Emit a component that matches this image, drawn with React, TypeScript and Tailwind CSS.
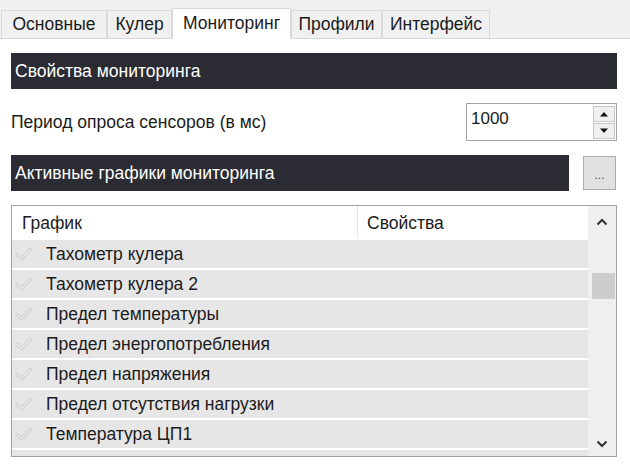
// Настройки — вкладка «Мониторинг»
import React from "react"

const tabs = [
  { label: "Основные", w: "w-[106px]" },
  { label: "Кулер", w: "w-[65px]" },
  { label: "Мониторинг", w: "w-[119px]", active: true },
  { label: "Профили", w: "w-[91px]" },
  { label: "Интерфейс", w: "w-[108px]" },
]

const rows = [
  "Тахометр кулера",
  "Тахометр кулера 2",
  "Предел температуры",
  "Предел энергопотребления",
  "Предел напряжения",
  "Предел отсутствия нагрузки",
  "Температура ЦП1",
  "",
]

function Check() {
  return (
    <svg width="18" height="14" viewBox="0 0 18 14" className="shrink-0">
      <path d="M2 7.5 L6.5 11.5 L15.5 2.5" fill="none" stroke="#cfcfcf" strokeWidth="3.2" strokeLinejoin="round" strokeLinecap="round" />
      <path d="M2 7.5 L6.5 11.5 L15.5 2.5" fill="none" stroke="#ececec" strokeWidth="1.2" strokeLinejoin="round" strokeLinecap="round" />
    </svg>
  )
}

function Chevron({ down }: { down?: boolean }) {
  return (
    <svg width="12" height="8" viewBox="0 0 12 8">
      <path d={down ? "M1.5 1.5 L6 6 L10.5 1.5" : "M1.5 6.5 L6 2 L10.5 6.5"} fill="none" stroke="#333" strokeWidth="2" />
    </svg>
  )
}

export default function App() {
  return (
    <div className="w-[630px] h-[472px] bg-white overflow-hidden text-[#1b1b1b] font-['Liberation_Sans',Arial,sans-serif]">
      {/* вкладки */}
      <div className="h-[39px] bg-[#f0f0f0] border-b border-[#d9d9d9] flex items-end pl-[1px]">
        {tabs.map(t =>
          t.active ? (
            <div key={t.label} className={`${t.w} h-[31px] -mb-px bg-white border border-b-0 border-[#d9d9d9] flex items-center justify-center text-[17.5px] pb-[2px]`}>
              {t.label}
            </div>
          ) : (
            <div key={t.label} className={`${t.w} h-[28px] bg-[#f0f0f0] border border-b-0 border-[#dadada] flex items-center justify-center text-[17.5px]`}>
              {t.label}
            </div>
          )
        )}
      </div>

      <div className="pl-[11px] pr-[13px]">
        <div className="mt-[14px] h-[36px] bg-[#2b2b33] text-white text-[17.5px] flex items-center pl-[4px]">
          Свойства мониторинга
        </div>

        <div className="mt-[14px] flex items-center justify-between">
          <span className="text-[17.5px]">Период опроса сенсоров (в мс)</span>
          <div className="w-[151px] h-[38px] border border-[#a5a5a5] flex">
            <div className="flex-1 pl-[4px] pt-[4px] text-[17px] leading-[22px]">1000</div>
            <div className="w-[23px] flex flex-col justify-center gap-[1px] pr-[1px]">
              <div className="h-[16px] bg-[#efefef] border border-[#c8c8c8] flex items-center justify-center">
                <svg width="10" height="6" viewBox="0 0 10 6"><path d="M1 5.5 L5 1 L9 5.5 Z" fill="#111" /></svg>
              </div>
              <div className="h-[16px] bg-[#efefef] border border-[#c8c8c8] flex items-center justify-center">
                <svg width="10" height="6" viewBox="0 0 10 6"><path d="M1 0.5 L5 5 L9 0.5 Z" fill="#111" /></svg>
              </div>
            </div>
          </div>
        </div>

        <div className="mt-[14px] flex items-center gap-[14px]">
          <div className="w-[558px] h-[36px] bg-[#2b2b33] text-white text-[17.5px] flex items-center pl-[4px]">
            Активные графики мониторинга
          </div>
          <button type="button" className="w-[33px] h-[34px] bg-[#e1e1e1] border border-[#adadad] text-[#555] text-[12px] leading-none pt-[4px]">
            ...
          </button>
        </div>

        {/* список графиков */}
        <div className="mt-[14px] h-[252px] border border-[#a0a0a0] flex overflow-hidden">
          <div className="flex-1 flex flex-col">
            <div className="h-[32px] shrink-0 flex text-[17.5px] bg-white">
              <div className="w-[346px] border-r border-[#e5e5e5] flex items-center pl-[10px] pt-[2px]">График</div>
              <div className="flex-1 flex items-center pl-[9px] pt-[2px]">Свойства</div>
            </div>
            {rows.map((r, i) => (
              <div key={i} className="h-[30px] shrink-0 border-t-2 border-white bg-[#e6e6e6] flex items-center text-[17.5px]">
                {r && (
                  <>
                    <div className="pl-[3px] w-[34px]"><Check /></div>
                    {r}
                  </>
                )}
              </div>
            ))}
          </div>
          <div className="w-[28px] bg-[#f0f0f0] flex flex-col items-center">
            <div className="h-[32px] flex items-center justify-center"><Chevron /></div>
            <div className="mt-[35px] w-[23px] ml-[2px] h-[26px] bg-[#cdcdcd]" />
            <div className="flex-1" />
            <div className="h-[24px] flex items-center justify-center"><Chevron down /></div>
          </div>
        </div>
      </div>
    </div>
  )
}
